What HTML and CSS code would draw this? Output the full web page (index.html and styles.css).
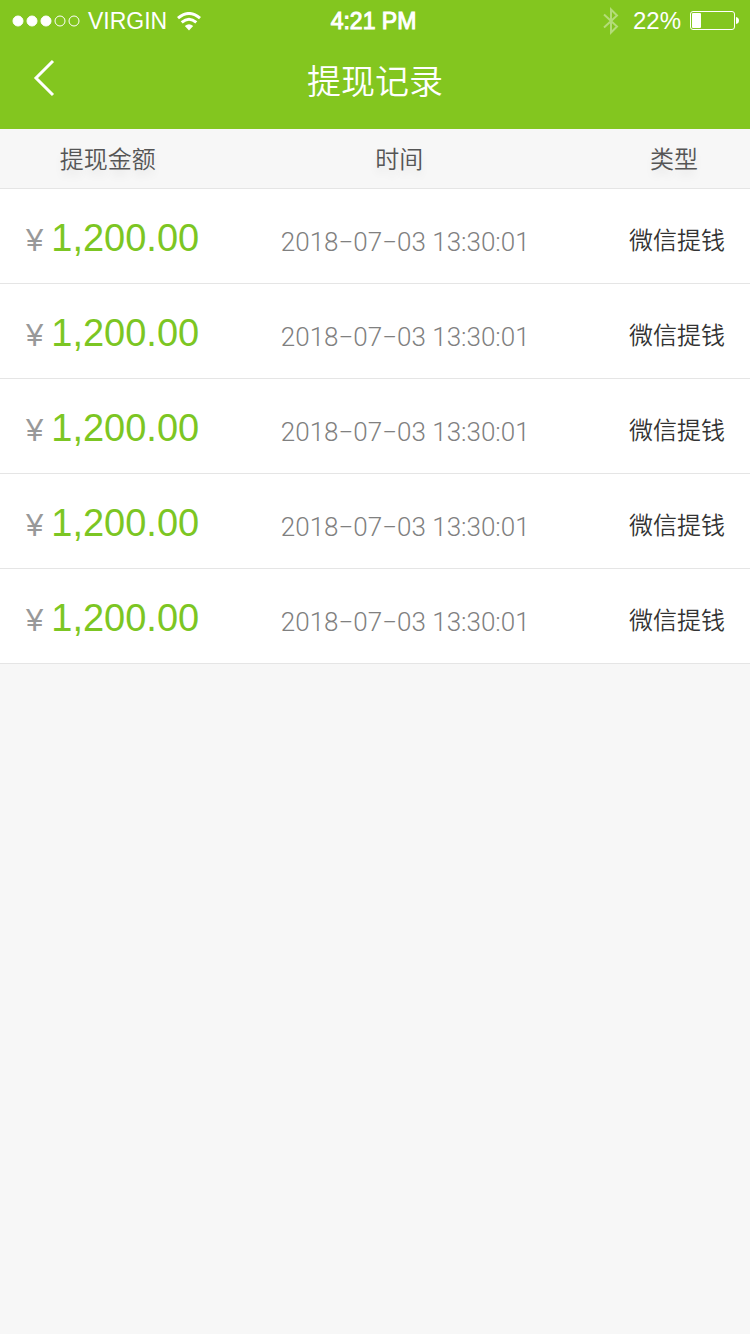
FILE: index.html
```
<!DOCTYPE html>
<html lang="zh-CN">
<head>
<meta charset="utf-8">
<meta name="viewport" content="width=device-width, initial-scale=1">
<title>提现记录</title>
<link rel="stylesheet" href="styles.css">
</head>
<body>
<header class="top">
  <div class="status">
    <div class="status-left">
      <svg class="signal" width="68" height="12" viewBox="0 0 68 12" fill="#fff" stroke="#fff" aria-hidden="true">
        <circle cx="6" cy="6" r="5"/><circle cx="20" cy="6" r="5"/><circle cx="34" cy="6" r="5"/>
        <circle cx="48" cy="6" r="5" fill="none"/><circle cx="62" cy="6" r="5" fill="none"/>
      </svg>
      <span class="carrier">VIRGIN</span>
      <svg class="wifi" width="24" height="19" viewBox="0 0 24 19" fill="none" stroke="#fff" stroke-width="3" aria-hidden="true">
        <path d="M1 6.200Q12-3.200 23 6.200"/>
        <path d="M4.700 10.400Q12 4.200 19.300 10.400"/>
        <path d="M12 18.500L7.800 14Q12 10.500 16.200 14Z" fill="#fff" stroke="none"/>
      </svg>
    </div>
    <time class="clock">4:21 PM</time>
    <div class="status-right">
      <svg class="bluetooth" width="16" height="28" viewBox="0 0 16 28" fill="none" stroke="#fff" stroke-width="2" aria-hidden="true">
        <path d="M1 7.500L14 19.500L8 25.500V2.500L14 8.500L1 20.500"/>
      </svg>
      <span class="percent">22%</span>
      <svg class="battery" width="49" height="20" viewBox="0 0 49 20" fill="none" aria-hidden="true">
        <rect x=".5" y=".5" width="44" height="18" rx="2.500" stroke="#fff"/>
        <rect x="2" y="2" width="9" height="15" rx="1" fill="#fff"/>
        <path d="M46 6Q49 6.500 49 9.500T46 13Z" fill="#fff"/>
      </svg>
    </div>
  </div>
  <div class="nav">
    <button class="back" type="button" aria-label="返回">
      <svg width="22" height="38" viewBox="0 0 22 38" fill="none" stroke="#fff" stroke-width="3" aria-hidden="true"><path d="M20 2L3 19L20 36"/></svg>
    </button>
    <h1 class="title">提现记录</h1>
  </div>
</header>
<main>
  <table class="records">
    <thead>
      <tr><th class="amount" scope="col">提现金额</th><th class="date" scope="col">时间</th><th class="type" scope="col">类型</th></tr>
    </thead>
    <tbody>
      <tr><td class="amount"><span class="yen">¥</span>1,200.00</td><td class="date">2018−07−03 13:30:01</td><td class="type">微信提钱</td></tr>
      <tr><td class="amount"><span class="yen">¥</span>1,200.00</td><td class="date">2018−07−03 13:30:01</td><td class="type">微信提钱</td></tr>
      <tr><td class="amount"><span class="yen">¥</span>1,200.00</td><td class="date">2018−07−03 13:30:01</td><td class="type">微信提钱</td></tr>
      <tr><td class="amount"><span class="yen">¥</span>1,200.00</td><td class="date">2018−07−03 13:30:01</td><td class="type">微信提钱</td></tr>
      <tr><td class="amount"><span class="yen">¥</span>1,200.00</td><td class="date">2018−07−03 13:30:01</td><td class="type">微信提钱</td></tr>
    </tbody>
  </table>
</main>
</body>
</html>
```
FILE: styles.css
```
* { box-sizing: border-box; }
body {
  margin: 0;
  background: #f7f7f7;
  font-family: "Liberation Sans", "Noto Sans CJK SC", sans-serif;
}
.top { background: #83c61f; color: #fff; }
.status {
  display: grid;
  grid-template-columns: 1fr auto 1fr;
  align-items: center;
  height: 42px;
  padding: 0 11px 0 12px;
  font-size: 24px;
  line-height: 42px;
}
.status-left, .status-right { display: flex; align-items: center; }
.status-right { justify-content: flex-end; }
.carrier { margin: 0 10px 0 8px; font-size: 23px; }
.clock { padding-right: 4px; font-size: 23px; -webkit-text-stroke: 1px #fff; }
.bluetooth { margin-right: 14px; opacity: .4; }
.percent { margin-right: 9px; }
.nav {
  display: grid;
  grid-template-columns: 88px 1fr 88px;
  align-items: start;
  height: 87px;
}
.back {
  display: flex;
  padding: 17px 33px;
  border: 0;
  background: none;
}
.title {
  margin: 13px 0 0;
  font: 350 34px/50px "Noto Sans CJK SC DemiLight", "Noto Sans CJK SC", sans-serif;
  text-align: center;
}
.records {
  width: 100%;
  table-layout: fixed;
  border-collapse: separate;
  border-spacing: 0;
  background: #fff;
}
.records th, .records td { padding: 0; border-bottom: 1px solid #e5e5e5; }
.records th {
  height: 60px;
  padding-bottom: 2px;
  background: #f7f7f7;
  color: #555;
  font: 350 24px/36px "Noto Sans CJK SC DemiLight", "Noto Sans CJK SC", sans-serif;
  text-shadow: 0 6px 8px rgba(0, 0, 0, .08);
}
.records td { height: 95px; }
.amount { width: 29%; }
.records th.amount { padding-right: 2px; text-align: center; }
.records td.amount {
  padding: 5px 0 0 26px;
  color: #7cc623;
  font-size: 38px;
  white-space: nowrap;
}
.yen {
  margin-right: 8px;
  color: #999;
  font: 400 31px/36px "Liberation Sans", sans-serif;
}
.date { width: 49%; text-align: center; }
.records th.date { padding-right: 4px; }
.records td.date {
  padding: 12px 0 0 8px;
  color: #808080;
  font: 300 26px/36px Roboto, sans-serif;
  white-space: nowrap;
}
.type { text-align: right; }
.records th.type { padding-right: 52px; }
.records td.type {
  padding: 6px 25px 0 0;
  color: #333;
  font: 350 24px/36px "Noto Sans CJK SC DemiLight", "Noto Sans CJK SC", sans-serif;
}
```
